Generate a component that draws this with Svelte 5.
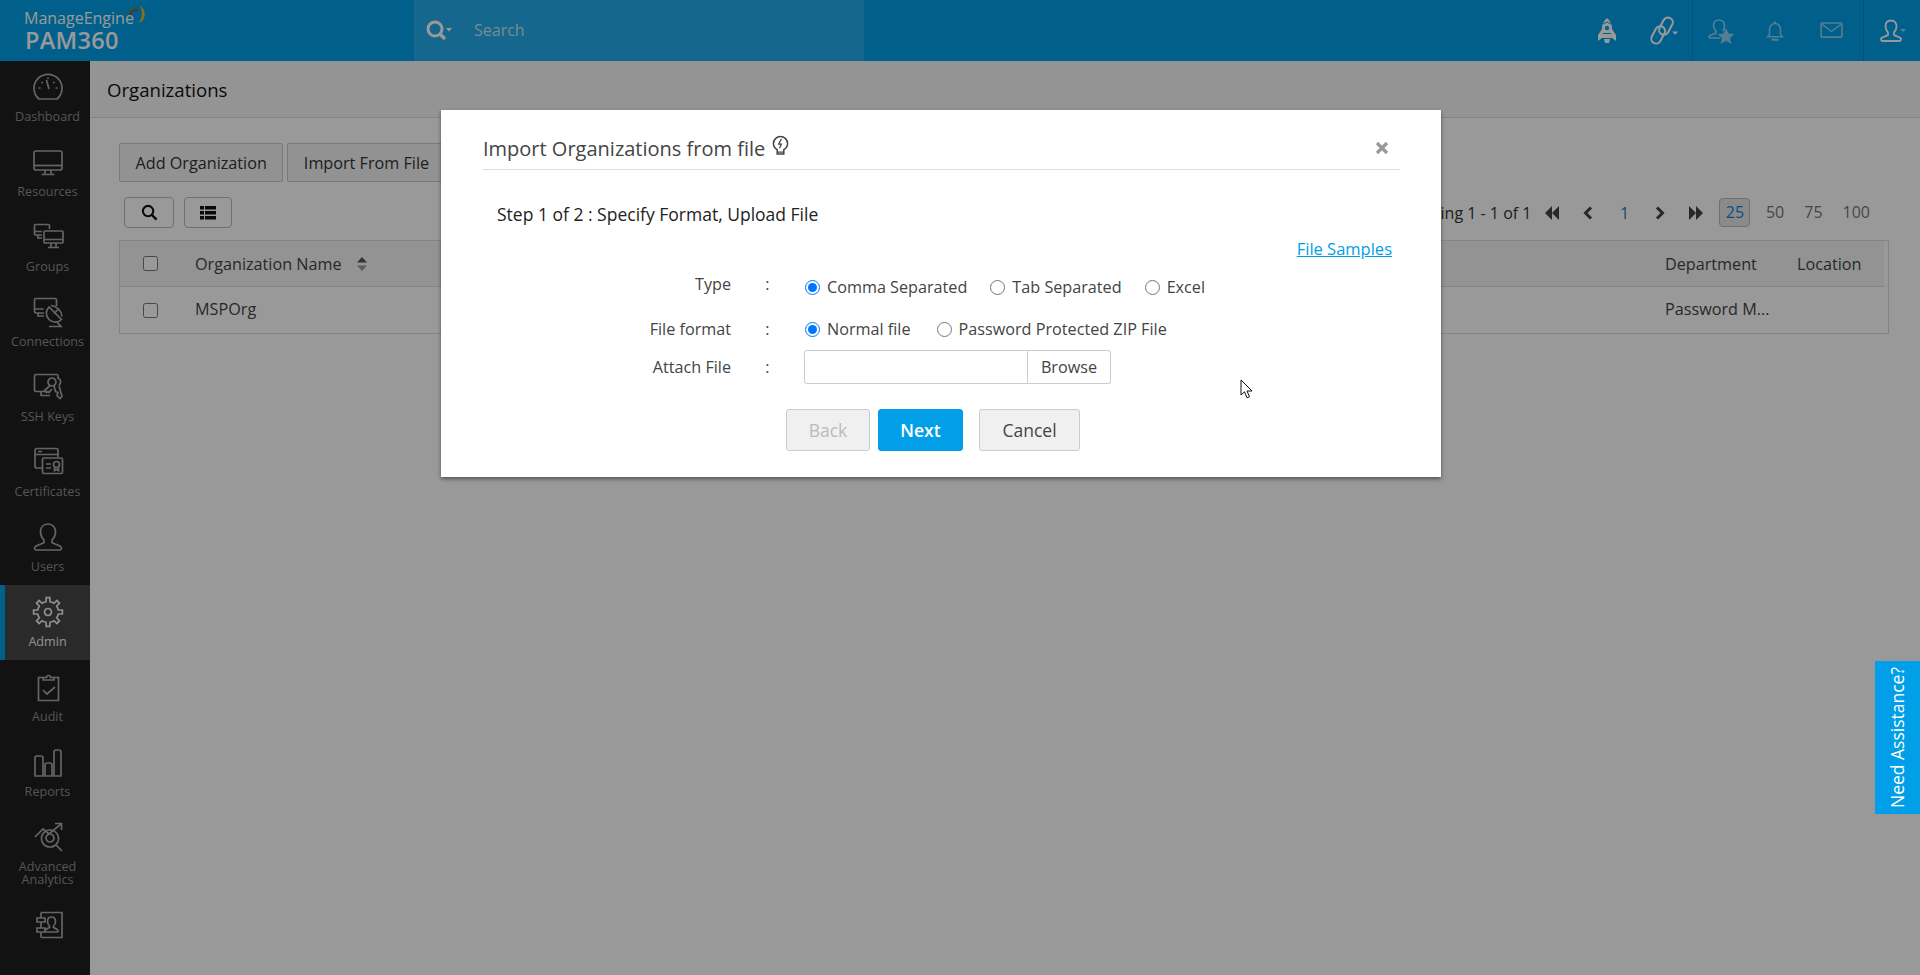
<script>
  function gear(cx, cy, r1, r2, n) {
    const step = (Math.PI * 2) / n;
    let d = '';
    for (let i = 0; i < n; i++) {
      const a = i * step - Math.PI / 2;
      const pts = [
        [a - step * 0.5, r1],
        [a - step * 0.24, r1],
        [a - step * 0.16, r2],
        [a + step * 0.16, r2],
        [a + step * 0.24, r1]
      ];
      for (const [t, r] of pts) {
        const x = (cx + Math.cos(t) * r).toFixed(2);
        const y = (cy + Math.sin(t) * r).toFixed(2);
        d += (d ? 'L' : 'M') + x + ' ' + y;
      }
    }
    return d + 'Z';
  }

  const nav = [
    { label: 'Dashboard', d: ['M7 28a14 14 0 1 1 18 0Z', 'M14.500 9l2.500 9', 'M6.500 17h2M23.500 17h2M9.500 11l1.200 1.200M22.500 11l-1.200 1.200M16 6.500v1.500'] },
    { label: 'Resources', d: ['M4 5h24a2 2 0 0 1 2 2v15a2 2 0 0 1-2 2H4a2 2 0 0 1-2-2V7a2 2 0 0 1 2-2Z', 'M2 19.500h28', 'M13 24v4M19 24v4M9.500 28.500h13'] },
    { label: 'Groups', d: ['M17.500 8V4.500a1 1 0 0 0-1-1H3.500a1 1 0 0 0-1 1V13a1 1 0 0 0 1 1H10', 'M2.500 10.500H10M6 14v3h4', 'M13 10h17a1 1 0 0 1 1 1v10a1 1 0 0 1-1 1H13a1 1 0 0 1-1-1V11a1 1 0 0 1 1-1Z', 'M12 18.500h19M19 22v4M24 22v4M16 26.500h11'] },
    { label: 'Connections', d: ['M24.500 10V4A1.500 1.500 0 0 0 23 2.500H4A1.500 1.500 0 0 0 2.500 4v11.500A1.500 1.500 0 0 0 4 17h8', 'M2.500 13h9M6 17v3h6', 'M17 11c-3.500 3.500-3.500 9 0 12.500s9 3.500 12.500 0Z', 'M22 17.500l5-5M19 9.500a12 12 0 0 1 11 11', 'M25 26l4 4.500H17'] },
    { label: 'SSH Keys', d: ['M26 8V5a1.500 1.500 0 0 0-1.500-1.500H4A1.500 1.500 0 0 0 2.500 5v14A1.500 1.500 0 0 0 4 20.500h11', 'M9 20.500v4h9', 'M20 7a4 4 0 1 1-.01 0ZM18 14.500l-5.500 5 2 2 1.500-1 1 1 3-3.500', 'M22 14.500l1.500 6 2.500 1-1 3 3 3 2-2-3-11M26 7a4 4 0 0 1 1 7'] },
    { label: 'Certificates', d: ['M26 11V4.500a2 2 0 0 0-2-2H5a2 2 0 0 0-2 2V20a2 2 0 0 0 2 2h5', 'M3 8.500h23M6 5.500h4', 'M12 12h17a1.500 1.500 0 0 1 1.500 1.500V26a1.500 1.500 0 0 1-1.500 1.500H12a1.500 1.500 0 0 1-1.500-1.500V13.500A1.500 1.500 0 0 1 12 12Z', 'M14 18h5M14 22h5', 'M24.500 15.500a3 3 0 1 1-.01 6 3 3 0 0 1 .01-6ZM22.500 21v3.500l2-1 2 1V21'] },
    { label: 'Users', d: ['M16 3c-5 0-7.500 3.500-7.500 8 0 3.500 1.500 6 3.500 8v2.500c-3 2-7 2.500-9 4.500-1 1-.5 3 1 3h24c1.500 0 2-2 1-3-2-2-6-2.500-9-4.500V19c2-2 3.500-4.500 3.500-8 0-4.500-2.500-8-7.500-8Z'] },
    { label: 'Admin', active: true, d: [gear(16, 16, 10.5, 14.5, 8), 'M16 12.500a3.500 3.500 0 1 1-.01 0Z'] },
    { label: 'Audit', d: ['M11 6.500H6.500v23h20v-23H22', 'M11 9h11V6.500h-3.500a2 2 0 0 0-4 0H11Z', 'M11 19l4 4 8-7'] },
    { label: 'Reports', d: ['M5 10h4a2 2 0 0 1 2 2v18H3V12a2 2 0 0 1 2-2Z', 'M15 17h3a2 2 0 0 1 2 2v11h-7V19a2 2 0 0 1 2-2Z', 'M25 4h2a2 2 0 0 1 2 2v24h-7V6a2 2 0 0 1 2-2Z'] },
    { label: 'Advanced\nAnalytics', cls: 'two', d: ['M3 16l8-8 6 5 12-10', 'M23 2.500h6.500V9', 'M18 9a8.500 8.500 0 1 1-.01 0Z', 'M24 24l6 6', 'M18 13a4 4 0 1 1-.01 0Z'] },
    { label: '', d: ['M9 3.500h21v25H9M9 3.500V9M9 13v6M9 23v5.500', 'M5 9h8v4H5ZM5 19h8v4H5Z', 'M19.500 8c-3 0-4 2-4 4.500 0 2 1 3.500 2 4.500v1.500c-2 1-4 1.500-4.500 3-.3 1 .3 1.500 1 1.500h11c.7 0 1.300-.5 1-1.500-.5-1.500-2.500-2-4.500-3V17c1-1 2-2.500 2-4.500 0-2.500-1-4.500-4-4.500Z'] }
  ];
</script>

<div class="app">
  <header class="topbar">
    <div class="logo">
      <div class="me">ManageEngine</div>
      <svg class="swoosh" viewBox="0 0 24 24" aria-hidden="true">
        <path d="M17 2c5 3 7 8 5 13-1 3-3 4-6 5 2-2 4-5 4-9 0-4-1-7-3-9Z" fill="#e8b923"/>
        <path d="M5 12c1-5 6-9 12-8" stroke="#2e9e5b" stroke-width="1.500" fill="none"/>
        <path d="M8 12c1-3 4-5 8-5" stroke="#c0392b" stroke-width="1.500" fill="none"/>
      </svg>
      <div class="pam">PAM360</div>
    </div>
    <div class="search">
      <svg class="s-ico" viewBox="0 0 28 24" aria-hidden="true">
        <circle cx="10" cy="10" r="7" fill="none" stroke="#fff" stroke-width="3"/>
        <path d="M15 15l5 5" stroke="#fff" stroke-width="3.500"/>
        <path d="M21 9h6l-3 3.500Z" fill="#fff"/>
      </svg>
      <span>Search</span>
    </div>
    <div class="tools">
      <div class="tgroup first">
        <svg class="ti rocket" viewBox="0 0 20 26" aria-hidden="true">
          <path d="M10 0C7 2.500 5 6 5 10v10h10V10c0-4-2-7.500-5-10Z" fill="#fff"/>
          <path d="M5 11L1 17v6l4-3ZM15 11l4 6v6l-4-3Z" fill="#fff"/>
          <path d="M7 21h6l-1 4H8Z" fill="#fff"/>
          <circle cx="10" cy="10" r="2.200" fill="#009fe8"/>
          <path d="M6 15.500h8M6 6l4-2 4 2" stroke="#009fe8" stroke-width="1" fill="none"/>
        </svg>
        <svg class="ti link" viewBox="0 0 30 30" aria-hidden="true">
          <g fill="none" stroke="#fff" stroke-width="2.100">
            <rect x="12.500" y="1" width="10" height="19" rx="5" transform="rotate(28 17.500 10.500)"/>
            <rect x="4.500" y="10" width="10" height="19" rx="5" transform="rotate(28 9.500 19.500)"/>
          </g>
          <path d="M24 16h6l-3 3.500Z" fill="#fff"/>
        </svg>
      </div>
      <div class="tgroup mid">
        <svg class="ti dim star" viewBox="0 0 26 26" aria-hidden="true">
          <path d="M11 2c-3.500 0-5.500 2.500-5.500 5.500 0 2.500 1 4 2.500 5.500v2c-2 1.200-5 1.700-6.500 3-.8.800-.5 2 .8 2h10" fill="none" stroke="#fff" stroke-width="1.700"/>
          <path d="M16.500 7.500c0-3-2-5.500-5.500-5.500M15 13c.8-1 1.500-3 1.500-5.500" fill="none" stroke="#fff" stroke-width="1.700"/>
          <path d="M18 10l2.500 5.500 6 .5-4.500 4 1.500 6-5.500-3.300-5.500 3.300 1.500-6-4.500-4 6-.5Z" fill="#fff"/>
        </svg>
        <svg class="ti dim bell" viewBox="0 0 24 26" aria-hidden="true">
          <path d="M12 4c-4 0-6.500 3-6.500 7v6l-2.500 3h18l-2.500-3v-6c0-4-2.500-7-6.500-7Z" fill="none" stroke="#fff" stroke-width="1.800"/>
          <circle cx="12" cy="2.700" r="1.300" fill="#fff"/>
          <path d="M8.500 23.500h7" stroke="#fff" stroke-width="2.200" stroke-linecap="round"/>
        </svg>
        <svg class="ti dim mail" viewBox="0 0 24 18" aria-hidden="true">
          <rect x="1" y="1" width="22" height="15" rx="1" fill="none" stroke="#fff" stroke-width="1.700"/>
          <path d="M2 2.500l10 7.500 10-7.500" fill="none" stroke="#fff" stroke-width="1.500"/>
        </svg>
      </div>
      <div class="tgroup last">
        <svg class="ti user" viewBox="0 0 26 24" aria-hidden="true">
          <path d="M11 1.500c-3.500 0-5.500 2.500-5.500 6 0 2.500 1 4.500 2.500 6v2.500c-2 1.200-5 1.700-6.500 3-.8.800-.5 3 .8 3h17.400c1.300 0 1.600-2.200.8-3-1.500-1.300-4.500-1.800-6.500-3V13.500c1.500-1.500 2.500-3.500 2.500-6 0-3.500-2-6-5.500-6Z" fill="none" stroke="#fff" stroke-width="1.800"/>
          <path d="M20 10h6l-3 3Z" fill="#fff" fill-opacity=".6"/>
        </svg>
      </div>
    </div>
  </header>

  <div class="body">
    <nav class="side">
      {#each nav as item}
        <div class="item" class:active={item.active} class:tall={item.cls}>
          <svg viewBox="0 0 32 32" aria-hidden="true">
            {#each item.d as d}<path {d} />{/each}
          </svg>
          {#if item.label}
            <span class="lbl">{item.label}</span>
          {/if}
        </div>
      {/each}
    </nav>

    <main class="main">
      <div class="title">Organizations</div>
      <div class="content">
        <div class="actions">
          <button class="btn">Add Organization</button>
          <button class="btn">Import From File</button>
        </div>
        <div class="tbar">
          <button class="ibtn search-b" aria-label="search">
            <svg viewBox="0 0 18 18" aria-hidden="true">
              <circle cx="7.500" cy="7.500" r="5.500" fill="none" stroke="#111" stroke-width="2.200"/>
              <path d="M11.500 11.500l5 5" stroke="#111" stroke-width="2.600"/>
            </svg>
          </button>
          <button class="ibtn list-b" aria-label="columns">
            <svg viewBox="0 0 16 14" aria-hidden="true">
              <path d="M0 0h4v3.500H0ZM5 0h11v3.500H5ZM0 5h4v3.500H0ZM5 5h11v3.500H5ZM0 10h4v3.500H0ZM5 10h11v3.500H5Z" fill="#111"/>
            </svg>
          </button>
          <div class="pager">
            <span class="showing">Showing 1 - 1 of 1</span>
            <svg class="pg g1" viewBox="0 0 16 14" aria-hidden="true"><path d="M8 0v14L1 7ZM15 0v14L8 7Z" fill="#444"/></svg>
            <svg class="pg g2" viewBox="0 0 10 14" aria-hidden="true"><path d="M8 1.500L2.500 7 8 12.500" fill="none" stroke="#444" stroke-width="3"/></svg>
            <span class="pnum">1</span>
            <svg class="pg g3" viewBox="0 0 10 14" aria-hidden="true"><path d="M2 1.500L7.500 7 2 12.500" fill="none" stroke="#444" stroke-width="3"/></svg>
            <svg class="pg g4" viewBox="0 0 16 14" aria-hidden="true"><path d="M1 0v14l7-7ZM8 0v14l7-7Z" fill="#444"/></svg>
            <span class="psize on">25</span>
            <span class="psize">50</span>
            <span class="psize">75</span>
            <span class="psize">100</span>
          </div>
        </div>
        <div class="table">
          <div class="row head">
            <span class="c-check"><input type="checkbox" /></span>
            <span class="c-name">Organization Name
              <svg class="sort" viewBox="0 0 10 14" aria-hidden="true"><path d="M5 0l5 5.500H0Z" fill="#555"/><path d="M5 14l5-5.500H0Z" fill="#999"/></svg>
            </span>
            <span class="c-dept">Department</span>
            <span class="c-loc">Location</span>
          </div>
          <div class="row rowb">
            <span class="c-check"><input type="checkbox" /></span>
            <span class="c-name">MSPOrg</span>
            <span class="c-dept">Password M...</span>
            <span class="c-loc"></span>
          </div>
        </div>
      </div>
    </main>
  </div>

  <div class="overlay"></div>

  <section class="modal">
    <div class="m-head">
      <h2>Import Organizations from file</h2>
      <svg class="bulb" viewBox="0 0 18 22" aria-hidden="true">
        <path d="M5.500 15.500C3 14 1.500 11.500 1.500 9a7.500 7.500 0 0 1 15 0c0 2.500-1.500 5-4 6.500v4.500h-7Z" fill="none" stroke="#444" stroke-width="1.600"/>
        <path d="M10 4L7 9.500h3L8 14" fill="none" stroke="#444" stroke-width="1.300"/>
        <path d="M6 18h6" stroke="#444" stroke-width="1.300"/>
      </svg>
      <svg class="close" viewBox="0 0 14 14" aria-hidden="true">
        <path d="M2 2l10 10M12 2L2 12" stroke="#999" stroke-width="3.200"/>
      </svg>
    </div>
    <div class="step">Step 1 of 2 : Specify Format, Upload File</div>
    <div class="samples"><a href="#samples">File Samples</a></div>
    <div class="form">
      <div class="frow r-type">
        <span class="flabel up">Type</span><span class="colon up">:</span>
        <div class="fval">
          <label class="g1w"><input type="radio" name="t" checked />Comma Separated</label>
          <label class="g2w"><input type="radio" name="t" />Tab Separated</label>
          <label><input type="radio" name="t" />Excel</label>
        </div>
      </div>
      <div class="frow r-format">
        <span class="flabel">File format</span><span class="colon">:</span>
        <div class="fval">
          <label class="g3w"><input type="radio" name="f" checked />Normal file</label>
          <label><input type="radio" name="f" />Password Protected ZIP File</label>
        </div>
      </div>
      <div class="frow r-attach">
        <span class="flabel">Attach File</span><span class="colon">:</span>
        <div class="fval file">
          <div class="finput"></div>
          <div class="browse">Browse</div>
        </div>
      </div>
    </div>
    <div class="m-actions">
      <button class="mb back" disabled>Back</button>
      <button class="mb next">Next</button>
      <button class="mb cancel">Cancel</button>
    </div>
  </section>

  <div class="assist"><span>Need Assistance?</span></div>

  <svg class="cursor" viewBox="0 0 13 20" aria-hidden="true">
    <path d="M1 1v15l3.500-3.200 2.500 6 2.500-1-2.500-5.800h5Z" fill="#fff" stroke="#111" stroke-width="1"/>
  </svg>
</div>

<style>
  :global(body) {
    margin: 0;
    background: #fff;
    font-family: "Open Sans", "Noto Sans", sans-serif;
    overflow: hidden;
  }
  button { font-family: inherit; }
  .app { height: 975px; display: flex; flex-direction: column; position: relative; overflow: hidden; }

  .topbar { height: 61px; flex: none; background: #009fe8; display: flex; color: #fff; }
  .logo { width: 414px; flex: none; padding: 10px 0 0 24px; box-sizing: border-box; position: relative; }
  .me { font-size: 16px; line-height: 17px; }
  .pam { font-size: 23.500px; line-height: 26px; font-weight: 600; letter-spacing: .3px; margin-left: 1px; }
  .swoosh { position: absolute; left: 122px; top: 3px; width: 24px; height: 24px; }
  .search { width: 450px; flex: none; background: rgba(255,255,255,.14); display: flex; align-items: center; padding-left: 11px; box-sizing: border-box; font-size: 16px; color: #c9e6f5; }
  .search span { margin-top: -2px; }
  .s-ico { width: 28px; height: 24px; margin-right: 21px; }
  .tools { margin-left: auto; display: flex; height: 61px; }
  .tgroup { display: flex; align-items: center; border-left: 1px solid rgba(0,0,0,.12); box-sizing: border-box; }
  .tgroup.first { border-left: 0; padding-right: 14px; }
  .tgroup.mid { width: 171px; }
  .tgroup.last { width: 57px; }
  .ti { display: block; flex: none; }
  .rocket { width: 20px; height: 26px; margin-right: 32px; }
  .link { width: 29px; height: 29px; }
  .dim { opacity: .55; }
  .star { width: 26px; height: 26px; margin-left: 15px; }
  .bell { width: 20px; height: 24px; margin-left: 31px; }
  .mail { width: 23px; height: 17px; margin-left: 35px; }
  .user { width: 26px; height: 24px; margin-left: 16px; }

  .body { flex: 1; min-height: 0; display: flex; }
  .side { width: 90px; flex: none; background: #1f1f1f; }
  .item { height: 75px; box-sizing: border-box; border-left: 5px solid transparent; display: flex; flex-direction: column; align-items: center; padding-top: 11px; color: #8e8e8e; }
  .item:first-child { margin-top: -1px; }
  .item.tall { height: 88px; }
  .item svg { width: 32px; height: 32px; display: block; flex: none; }
  .item path { fill: none; stroke: #a8a8a8; stroke-width: 1.700; }
  .lbl { font-size: 12.600px; line-height: 13px; margin-top: 7px; white-space: pre-line; text-align: center; }
  .item.active { background: #464646; border-left-color: #009fe8; color: #f2f2f2; }
  .item.active path { stroke: #eee; }

  .main { flex: 1; min-width: 0; background: #fff; }
  .title { height: 57px; box-sizing: border-box; border-bottom: 1px solid #ddd; background: #f7f7f7; font-size: 18.600px; color: #111; line-height: 58px; padding-left: 17px; }
  .content { padding: 25px 31px 0 29px; }
  .actions { display: flex; gap: 4px; }
  .btn { height: 39px; padding: 0 15.500px; font-size: 16.200px; color: #333; border: 1px solid #ccc; background: #f3f3f3; border-radius: 2px; }
  .tbar { display: flex; align-items: center; height: 31px; margin-top: 15px; padding-left: 5px; }
  .ibtn { height: 31px; background: transparent; border: 1px solid #bbb; border-radius: 4px; padding: 0; display: flex; align-items: center; justify-content: center; }
  .search-b { width: 50px; }
  .search-b svg { width: 17px; height: 17px; }
  .list-b { width: 48px; margin-left: 10px; }
  .list-b svg { width: 16px; height: 14px; }
  .pager { margin-left: auto; display: flex; align-items: center; font-size: 16px; color: #333; padding-right: 10px; }
  .showing { margin-right: 13px; }
  .pg { height: 14px; display: block; flex: none; }
  .g1 { width: 16px; margin-right: 23px; }
  .g2 { width: 10px; }
  .pnum { width: 62px; text-align: center; color: #1b7fd0; }
  .g3 { width: 10px; margin-right: 23px; }
  .g4 { width: 16px; margin-right: 15px; }
  .psize { padding: 0 8px; height: 29px; line-height: 27px; color: #777; font-size: 16px; margin-right: 2px; box-sizing: border-box; border: 1px solid transparent; }
  .psize.on { background: #e6e6e6; border-color: #bbb; border-radius: 4px; color: #1b7fd0; width: 31px; padding: 0; text-align: center; margin-right: 6.500px; }
  .psize:last-child { margin-right: 0; }

  .table { margin-top: 12px; border: 1px solid #ddd; background: #fff; }
  .row { height: 46px; box-sizing: border-box; margin-right: 4px; display: flex; align-items: center; font-size: 16.200px; color: #444; }
  .row.head { border-bottom: 1px solid #ddd; background: #f5f5f5; }
  .rowb .c-name, .rowb .c-dept { margin-top: -2px; }
  .c-check { width: 75px; flex: none; display: flex; padding-left: 23px; box-sizing: border-box; }
  .c-check input { width: 15px; height: 15px; margin: 0; }
  .c-name { flex: 1; display: flex; align-items: center; }
  .sort { width: 10px; height: 14px; margin-left: 15px; }
  .c-dept { width: 132px; flex: none; }
  .c-loc { width: 87px; flex: none; }

  .overlay { position: absolute; inset: 0; background: rgba(0,0,0,.4); }

  .modal { position: absolute; left: 441px; top: 110px; width: 1000px; height: 367px; background: #fff; box-shadow: 0 2px 4px rgba(0,0,0,.45); box-sizing: border-box; padding: 0 41px 0 42px; color: #444; }
  .m-head { height: 59px; border-bottom: 1px solid #ddd; display: flex; align-items: flex-start; position: relative; }
  h2 { margin: 25px 0 0; font-size: 20px; line-height: 27px; font-weight: 400; color: #444; }
  .bulb { width: 17px; height: 21px; margin: 25px 0 0 7px; }
  .close { position: absolute; right: 11px; top: 31px; width: 14px; height: 14px; }
  .step { padding: 32px 0 0 14px; font-size: 17.500px; line-height: 24px; color: #222; }
  .samples { text-align: right; padding-right: 8px; line-height: 20px; font-size: 16.500px; margin-top: 13px; }
  .samples a { color: #009fe8; }
  .form { margin-top: 11px; font-size: 16.200px; color: #444; }
  .frow { display: flex; align-items: center; }
  .flabel { width: 248px; text-align: right; flex: none; }
  .colon { width: 73px; text-align: center; flex: none; }
  .up { position: relative; top: -3px; }
  .fval { display: flex; align-items: center; }
  .fval label { display: flex; align-items: center; }
  .fval input { width: 15px; height: 15px; margin: 0 7px 0 1px; accent-color: #0075ff; }
  .g1w { margin-right: 22px; }
  .g2w { margin-right: 22px; }
  .g3w { margin-right: 25px; }
  .r-type { height: 34px; }
  .r-format { height: 34px; margin-top: 8px; }
  .r-attach { height: 34px; margin-top: 4px; }
  .file { height: 34px; }
  .finput { width: 224px; height: 34px; box-sizing: border-box; border: 1px solid #ccc; border-radius: 3px 0 0 3px; }
  .browse { width: 83px; height: 34px; box-sizing: border-box; border: 1px solid #ccc; border-left: 0; border-radius: 0 3px 3px 0; text-align: center; line-height: 32px; color: #444; }
  .m-actions { display: flex; gap: 8px; margin: 25px 0 0 303px; }
  .mb { height: 42px; font-size: 17.500px; border-radius: 3px; border: 1px solid #ccc; background: #f0f0f0; color: #444; padding: 0; }
  .back { width: 84px; color: #bbb; }
  .next { width: 85px; background: #009fe8; border-color: #009fe8; color: #fff; font-weight: 600; }
  .cancel { width: 101px; margin-left: 8px; }

  .assist { position: absolute; left: 1875px; top: 661px; width: 45px; height: 153px; background: #009fe8; display: flex; align-items: center; justify-content: center; }
  .assist span { writing-mode: vertical-rl; transform: rotate(180deg); color: #fff; font-size: 17.500px; white-space: nowrap; margin-left: -1px; }
  .cursor { position: absolute; left: 1240px; top: 379px; width: 13px; height: 20px; }
</style>
